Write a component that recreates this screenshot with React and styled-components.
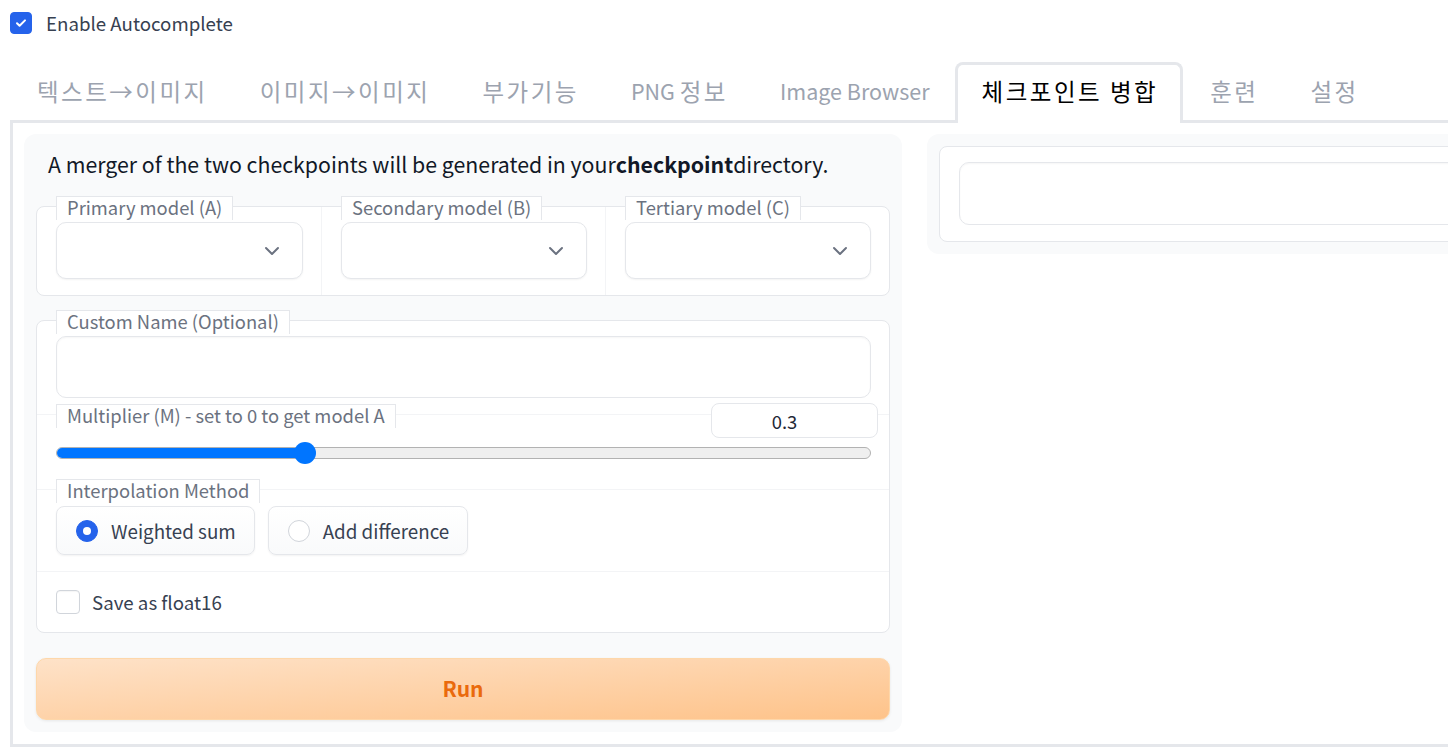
import React from 'react';
import styled, { createGlobalStyle } from 'styled-components';

const GlobalStyle = createGlobalStyle`
  html, body { margin: 0; padding: 0; background: #ffffff; overflow: hidden; }
  body { font-family: "Noto Sans CJK KR", "Noto Sans", sans-serif; color: #374151; }
  * { box-sizing: border-box; }
`;

const Page = styled.div`
  width: 1830px;
  padding: 12px 0 0 10px;
`;

const CheckRow = styled.label`
  display: flex;
  align-items: center;
  gap: ${p => p.$gap || 14}px;
  font-size: 18.7px;
  line-height: 22px;
  color: #374151;
  height: ${p => p.$h || 22}px;
`;

const Box = styled.span`
  flex: 0 0 auto;
  width: ${p => p.$size}px;
  height: ${p => p.$size}px;
  border-radius: 4px;
  display: flex;
  align-items: center;
  justify-content: center;
  background: ${p => (p.$checked ? '#2563eb' : '#ffffff')};
  border: 1px solid ${p => (p.$checked ? '#2563eb' : '#d1d5db')};
  box-shadow: ${p => (p.$checked ? 'none' : 'inset 0 1px 1px rgba(0,0,0,0.04)')};
`;

const TabNav = styled.div`
  display: flex;
  margin-top: 28px;
  border-bottom: 3px solid #e5e7eb;
  height: 61px;
`;

const Tab = styled.div`
  height: ${p => (p.$active ? 61 : 58)}px;
  margin-bottom: ${p => (p.$active ? -3 : 0)}px;
  padding: 0 22px ${p => (p.$active ? 6 : 3)}px 24px;
  display: flex;
  align-items: center;
  font-size: 21.5px;
  line-height: 30px;
  white-space: pre;
  color: ${p => (p.$active ? '#000000' : '#9ca3af')};
  background: #ffffff;
  border: 3px solid ${p => (p.$active ? '#e5e7eb' : 'transparent')};
  border-bottom: none;
  border-radius: 8px 8px 0 0;
  position: relative;
`;

const Hangul = styled.span`
  font-size: 23.5px;
  letter-spacing: 2.5px;
`;

const Panel = styled.div`
  display: flex;
  align-items: flex-start;
  gap: 25px;
  border: 3px solid #e5e7eb;
  border-top: none;
  padding: 11px 11px 12px 11px;
`;

const Column = styled.div`
  flex: ${p => (p.$grow ? '1 1 auto' : '0 0 878px')};
  background: #f9fafb;
  border-radius: 12px;
  padding: 12px;
  display: flex;
  flex-direction: column;
`;

const Description = styled.p`
  margin: 0;
  padding: 6px 12px;
  font-size: 21.3px;
  line-height: 24px;
  color: #111827;
  white-space: nowrap;
  b { font-weight: 700; }
`;

const Block = styled.div`
  margin-top: ${p => p.$mt || 0}px;
  background: #ffffff;
  border: 1px solid #e5e7eb;
  border-radius: 8px;
`;

const DropGrid = styled(Block)`
  display: grid;
  grid-template-columns: 1fr 1fr 1fr;
`;

const Field = styled.div`
  display: flex;
  flex-direction: column;
  align-items: flex-start;
  padding: 0 18px ${p => p.$pb ?? 16}px 19px;
  border-left: ${p => (p.$divider ? '1px solid #f3f4f6' : 'none')};
`;

const Section = styled.div`
  display: flex;
  flex-direction: column;
  align-items: stretch;
  padding: 0 18px ${p => p.$pb ?? 16}px 19px;
  border-top: ${p => (p.$divider ? '1px solid #f3f4f6' : 'none')};
`;

const Label = styled.span`
  align-self: flex-start;
  margin-top: -11px;
  height: 24px;
  padding: 0 10px;
  font-size: 18.4px;
  line-height: 21px;
  color: #6b7280;
  background: #ffffff;
  border: 1px solid #e5e7eb;
  border-bottom: none;
  white-space: nowrap;
`;

const Dropdown = styled.div`
  align-self: stretch;
  margin-top: 2px;
  height: 57px;
  border: 1px solid #e5e7eb;
  border-radius: 10px;
  background: #ffffff;
  box-shadow: 0 1px 2px rgba(0, 0, 0, 0.05);
  display: flex;
  align-items: center;
  justify-content: flex-end;
  padding-right: 22px;
`;

const TextBox = styled.div`
  align-self: stretch;
  margin-top: ${p => p.$mt ?? 2}px;
  height: ${p => p.$h || 62}px;
  border: 1px solid #e5e7eb;
  border-radius: 10px;
  background: #ffffff;
  box-shadow: inset 0 1px 2px rgba(0, 0, 0, 0.04);
`;

const SliderHead = styled.div`
  display: flex;
  justify-content: space-between;
  align-items: flex-start;
  margin-top: -11px;
  margin-right: -7px;
  & > span { margin-top: 0; }
`;

const NumberBox = styled.div`
  width: 167px;
  height: 35px;
  margin-top: -1px;
  padding-right: 20px;
  border: 1px solid #e5e7eb;
  border-radius: 8px;
  background: #ffffff;
  display: flex;
  align-items: center;
  justify-content: center;
  font-size: 18.4px;
  color: #1f2937;
`;

const SliderWrap = styled.div`
  position: relative;
  height: 22px;
  margin-top: 4px;
  display: flex;
  align-items: center;
`;

const Track = styled.div`
  flex: 1;
  height: 12px;
  border-radius: 6px;
  background: #efefef;
  border: 1px solid #b2b2b2;
  overflow: hidden;
  display: flex;
`;

const Fill = styled.div`
  height: 100%;
  background: #0075ff;
`;

const Thumb = styled.div`
  position: absolute;
  top: 0;
  width: 22px;
  height: 22px;
  margin-left: -11px;
  border-radius: 50%;
  background: #0075ff;
`;

const RadioRow = styled.div`
  display: flex;
  gap: 13px;
  margin-top: 3px;
`;

const RadioOption = styled.label`
  display: flex;
  align-items: center;
  gap: 13px;
  height: 49px;
  padding: 0 18px 0 19px;
  border: 1px solid #e5e7eb;
  border-radius: 8px;
  background: linear-gradient(to bottom, #ffffff, #f9fafb);
  box-shadow: 0 1px 2px rgba(0, 0, 0, 0.05);
  font-size: 18.8px;
  line-height: 22px;
  color: #374151;
`;

const RadioDot = styled.span`
  width: 22px;
  height: 22px;
  border-radius: 50%;
  display: flex;
  align-items: center;
  justify-content: center;
  background: ${p => (p.$checked ? '#2563eb' : '#ffffff')};
  border: 1px solid ${p => (p.$checked ? '#2563eb' : '#d1d5db')};
  &::after {
    content: '';
    width: 8px;
    height: 8px;
    border-radius: 50%;
    background: ${p => (p.$checked ? '#ffffff' : 'transparent')};
  }
`;

const CheckSection = styled.div`
  border-top: 1px solid #f3f4f6;
  padding: 18px 19px 18px;
`;

const RunButton = styled.button`
  margin-top: 25px;
  height: 62px;
  border: 1px solid #fed7aa;
  border-radius: 10px;
  background: linear-gradient(to bottom right, #fee2c8, #fec38a);
  box-shadow: 0 1px 3px rgba(0, 0, 0, 0.08);
  font-family: inherit;
  font-size: 21px;
  line-height: 24px;
  padding: 0 0 3px;
  font-weight: 700;
  color: #ea6a0c;
  cursor: pointer;
`;

const RightBlock = styled(Block)`
  padding: 15px 20px 16px 19px;
`;

const Chevron = () => (
  <svg width="16" height="10" viewBox="0 0 16 10" fill="none">
    <path d="M2 2l6 6 6-6" stroke="#6b7280" strokeWidth="2" strokeLinecap="round" strokeLinejoin="round" />
  </svg>
);

const Tick = () => (
  <svg width="14" height="14" viewBox="0 0 14 14" fill="none">
    <path d="M3 7.2l2.6 2.6L11 4.4" stroke="#ffffff" strokeWidth="2" strokeLinecap="round" strokeLinejoin="round" />
  </svg>
);

const tabs = ['텍스트→이미지', '이미지→이미지', '부가기능', 'PNG 정보', 'Image Browser', '체크포인트 병합', '훈련', '설정'];

const TabText = ({ text }) =>
  text.split(/([A-Za-z]+ ?)/).filter(Boolean).map((part, i) =>
    /[A-Za-z]/.test(part) ? <span key={i}>{part}</span> : <Hangul key={i}>{part}</Hangul>
  );

export default function App() {
  const multiplier = 0.3;
  return (
    <>
      <GlobalStyle />
      <Page>
        <CheckRow>
          <Box $size={22} $checked><Tick /></Box>
          Enable Autocomplete
        </CheckRow>
        <TabNav>
          {tabs.map(t => (
            <Tab key={t} $active={t === '체크포인트 병합'}><TabText text={t} /></Tab>
          ))}
        </TabNav>
        <Panel>
          <Column>
            <Description>
              A merger of the two checkpoints will be generated in your<b>checkpoint</b>directory.
            </Description>
            <DropGrid $mt={24}>
              <Field>
                <Label>Primary model (A)</Label>
                <Dropdown><Chevron /></Dropdown>
              </Field>
              <Field $divider>
                <Label>Secondary model (B)</Label>
                <Dropdown><Chevron /></Dropdown>
              </Field>
              <Field $divider>
                <Label>Tertiary model (C)</Label>
                <Dropdown><Chevron /></Dropdown>
              </Field>
            </DropGrid>
            <Block $mt={24}>
              <Section>
                <Label>Custom Name (Optional)</Label>
                <TextBox />
              </Section>
              <Section $divider $pb={25}>
                <SliderHead>
                  <Label>Multiplier (M) - set to 0 to get model A</Label>
                  <NumberBox>{multiplier}</NumberBox>
                </SliderHead>
                <SliderWrap>
                  <Track><Fill style={{ width: `${multiplier * 100 + 0.5}%` }} /></Track>
                  <Thumb style={{ left: `${multiplier * 100 + 0.5}%` }} />
                </SliderWrap>
              </Section>
              <Section $divider>
                <Label>Interpolation Method</Label>
                <RadioRow>
                  <RadioOption><RadioDot $checked />Weighted sum</RadioOption>
                  <RadioOption><RadioDot />Add difference</RadioOption>
                </RadioRow>
              </Section>
              <CheckSection>
                <CheckRow $gap={12} $h={24}>
                  <Box $size={24} />
                  Save as float16
                </CheckRow>
              </CheckSection>
            </Block>
            <RunButton>Run</RunButton>
          </Column>
          <Column $grow>
            <RightBlock>
              <TextBox $h={63} $mt={0} />
            </RightBlock>
          </Column>
        </Panel>
      </Page>
    </>
  );
}
